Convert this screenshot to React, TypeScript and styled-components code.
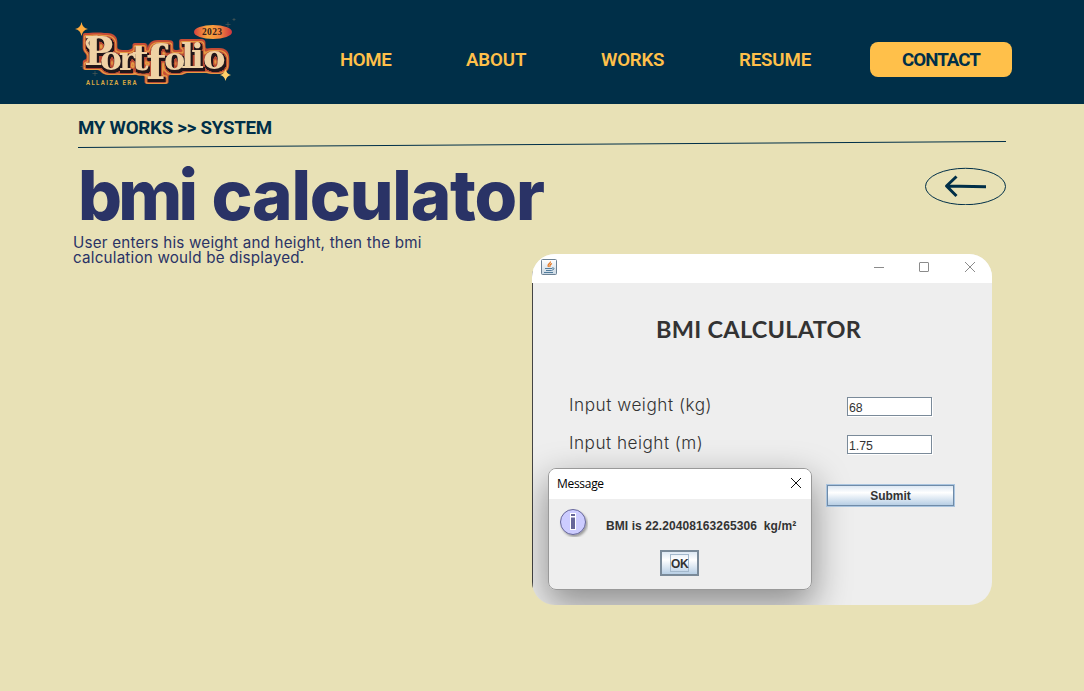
import React from "react";
import styled, { createGlobalStyle } from "styled-components";

const navy = "#002f48";
const amber = "#ffc04a";
const indigo = "#2a3366";

const GlobalStyle = createGlobalStyle`
  * { box-sizing: border-box; }
  body { margin: 0; background: #e8e1b6; }
`;

const Page = styled.div`
  width: 1084px;
  height: 691px;
  overflow: hidden;
  background: #e8e1b6;
  font-family: "Liberation Sans", sans-serif;
`;

const Header = styled.header`
  display: flex;
  align-items: flex-start;
  height: 104px;
  padding-left: 70px;
  background: ${navy};
`;

const Logo = styled.svg`
  flex: none;
  width: 170px;
  height: 104px;
`;

const Nav = styled.nav`
  display: flex;
  align-items: center;
  height: 35px;
  margin-top: 42px;
  padding-left: 100px;
`;

const NavLink = styled.a<{ $width: number; $spacing: number }>`
  flex: none;
  width: ${(p) => p.$width}px;
  font: 600 18.7px/37px Roboto, sans-serif;
  height: 35px;
  letter-spacing: ${(p) => p.$spacing}px;
  color: ${amber};
  white-space: nowrap;
`;

const ContactButton = styled.a`
  flex: none;
  width: 142px;
  height: 35px;
  padding-left: 32px;
  border-radius: 8px;
  background: ${amber};
  color: ${navy};
  font: 700 18.7px/37px Roboto, sans-serif;
  letter-spacing: -0.95px;
  white-space: nowrap;
`;

const Main = styled.main`
  padding: 12px 78px 0;
`;

const Breadcrumb = styled.div`
  height: 24px;
  font: 700 18.7px/24px Roboto, sans-serif;
  letter-spacing: -0.25px;
  color: ${navy};
  white-space: nowrap;
`;

const Divider = styled.svg`
  display: block;
  width: 928px;
  height: 10px;
`;

const Columns = styled.div`
  display: grid;
  grid-template-columns: 454px 474px;
`;

const Title = styled.h1`
  margin: 5px 0 0 0;
  height: 80px;
  font: 800 69px/80px Inter, sans-serif;
  letter-spacing: -1.2px;
  word-spacing: 3.5px;
  color: ${indigo};
  white-space: nowrap;
`;

const TightWord = styled.span`
  letter-spacing: -3.8px;
`;

const Description = styled.p`
  margin: 0 0 0 -5px;
  font: 400 15.2px/15px Inter, sans-serif;
  letter-spacing: 0.21px;
  color: ${indigo};
  white-space: nowrap;
`;

const BackArrow = styled.svg`
  display: block;
  width: 82px;
  height: 38px;
  margin: 17px 0 0 392px;
`;

const AppWindow = styled.section`
  position: relative;
  overflow: hidden;
  width: 460px;
  height: 351px;
  margin-top: 49px;
  border-radius: 23px;
  background: linear-gradient(90deg, #444 1px, #eee 1px);
  color: #333;
`;

const TitleBar = styled.div`
  display: flex;
  align-items: center;
  justify-content: space-between;
  height: 29px;
  padding: 0 16px 3px 9px;
  background: #fff;
`;

const WindowControls = styled.svg`
  width: 102px;
  height: 12px;
`;

const Heading = styled.h2`
  margin: 31px 0 0 124px;
  font: 700 23.5px/30px Lato, sans-serif;
  letter-spacing: 0.28px;
  white-space: nowrap;
`;

const Form = styled.div`
  display: grid;
  row-gap: 18px;
  margin-top: 53px;
`;

const FieldRow = styled.label`
  display: flex;
  height: 20px;
  padding-left: 37px;
`;

const FieldName = styled.span<{ $spacing: number }>`
  width: 278px;
  font: 300 17.2px/16px Inter, sans-serif;
  letter-spacing: ${(p) => p.$spacing}px;
  white-space: nowrap;
`;

const Field = styled.span`
  width: 85px;
  height: 19px;
  padding: 2px 0 0 1px;
  border: 1px solid #7a8a99;
  background: #fff;
  box-shadow: 1px 1px 0 #fff;
  font-size: 12.3px;
  line-height: 16px;
`;

const SubmitButton = styled.button`
  position: relative;
  display: block;
  width: 127px;
  height: 21px;
  margin: 30px 0 0 295px;
  padding: 1px 0 0;
  border: 1px solid #6f8ba8;
  outline: 1px solid #a9c4df;
  background: linear-gradient(#dde8f3, #fff 35%, #b8cfe5);
  font: bold 12px/18px "Liberation Sans", sans-serif;
  color: #333;
`;

const Dialog = styled.div`
  position: absolute;
  left: 16px;
  top: 214px;
  width: 264px;
  height: 122px;
  overflow: hidden;
  border: 1px solid #999;
  border-radius: 8px;
  background: #eee;
`;

const DialogShadow = styled.div`
  position: absolute;
  left: 16px;
  top: 214px;
  width: 264px;
  height: 122px;
  border-radius: 8px;
  box-shadow: 0 14px 36px 2px rgba(0, 0, 0, 0.4);
`;

const DialogBar = styled.div`
  display: flex;
  align-items: center;
  justify-content: space-between;
  height: 30px;
  padding: 0 9px 0 8px;
  background: #fff;
  color: #000;
  font: 12px/30px "Open Sans", sans-serif;
  letter-spacing: -0.3px;
`;

const CloseIcon = styled.svg`
  width: 12px;
  height: 12px;
  margin-bottom: 2px;
`;

const DialogMessage = styled.div`
  display: flex;
  height: 42px;
  padding: 9px 0 0 10px;
  font: bold 12px/36px "Liberation Sans", sans-serif;
  letter-spacing: 0.09px;
  white-space: pre;
`;

const MessageText = styled.span`
  margin-left: 15px;
`;

const OkButton = styled.button`
  display: block;
  width: 39px;
  height: 26px;
  margin: 9px 0 0 111px;
  padding: 0;
  border: 2px solid #7a8a99;
  background: linear-gradient(#dde8f3, #fff 35%, #b8cfe5);
  color: #333;
`;

const OkLabel = styled.span`
  display: block;
  width: 19px;
  height: 18px;
  margin: 0 auto;
  border: 1px solid #a3b8cc;
  font: bold 12px/18px "Liberation Sans", sans-serif;
  letter-spacing: -0.4px;
`;

const letters: [string, number, number, number][] = [
  ["P", 14, 65, 39],
  ["o", 30, 70, 33],
  ["r", 49, 70, 31],
  ["t", 62, 70, 36],
  ["f", 76, 79, 46],
  ["o", 94, 70, 32],
  ["l", 111, 68, 34],
  ["i", 121, 68, 34],
  ["o", 133, 69, 34],
];

const outlines = [
  { name: "shade", radius: 1, color: "#21161a", dy: 2 },
  { name: "rust", radius: 2, color: "#b64832", dy: 1.8 },
  { name: "gold", radius: 3, color: "#e69b43", dy: 1.5 },
  { name: "red", radius: 4, color: "#c74d35", dy: 1.2 },
];

function PortfolioLogo() {
  return (
    <Logo viewBox="0 0 170 104">
      <defs>
        <linearGradient id="badge"><stop stopColor="#d9423d" /><stop offset=".35" stopColor="#f8a73f" /><stop offset=".65" stopColor="#f58b3d" /><stop offset="1" stopColor="#cc353f" /></linearGradient>
        <filter id="outline" x="-10%" y="-20%" width="120%" height="140%" colorInterpolationFilters="sRGB">
          {outlines.map((o) => (
            <React.Fragment key={o.name}>
              <feMorphology in="SourceAlpha" operator="dilate" radius={o.radius} />
              <feGaussianBlur stdDeviation={o.radius > 1 ? 1.1 : 0.6} />
              <feComponentTransfer><feFuncA type="linear" slope="3" intercept="-1" /></feComponentTransfer>
              <feOffset dx="0.8" dy={o.dy} result={`${o.name}Shape`} />
              <feFlood floodColor={o.color} />
              <feComposite in2={`${o.name}Shape`} operator="in" result={o.name} />
            </React.Fragment>
          ))}
          <feMerge>
            <feMergeNode in="red" />
            <feMergeNode in="gold" />
            <feMergeNode in="rust" />
            <feMergeNode in="shade" />
            <feMergeNode in="SourceGraphic" />
          </feMerge>
        </filter>
      </defs>
      <g filter="url(#outline)" fill="#efd2a5" fontFamily="DejaVu Serif, serif" fontWeight="700">
        {letters.map(([ch, x, y, size], i) => (
          <text key={i} x={x} y={y} fontSize={size}>{ch}</text>
        ))}
        <path d="M20 48C14 43 18 37 27 37" fill="none" stroke="#efd2a5" strokeWidth="3" strokeLinecap="round" />
      </g>
      <ellipse cx="143" cy="32" rx="19" ry="7" fill="url(#badge)" />
      <text x="132" y="35" fontFamily="Liberation Serif, serif" fontWeight="700" fontSize="9.5" textLength="20" fill="#35201d">2023</text>
      <path d="M11.500 22Q12.500 28 18 29Q12.500 30 11.500 36Q10.500 30 5 29Q10.500 28 11.500 22Z" fill="#ffab3d" />
      <path d="M155.500 69Q156.500 74 161 75Q156.500 76 155.500 81Q154.500 76 150 75Q154.500 74 155.500 69Z" fill="#ffd16a" />
      <path d="M13 64v5M10.500 66.500h5M25 71v5M22.500 73.500h5M158 22v5M155.500 24.500h5M164 18v3M162.500 19.500h3" stroke="#7c725e" strokeWidth=".7" opacity=".6" />
      <text transform="translate(16 85) scale(.78 1)" fontFamily="Roboto, sans-serif" fontWeight="700" fontSize="7.8" textLength="65" fill="#d7a743">ALLAIZA ERA</text>
    </Logo>
  );
}

function JavaIcon() {
  return (
    <svg width="16" height="16" viewBox="0 0 16 16">
      <defs><linearGradient id="java" x2="0" y2="1"><stop stopColor="#fff" /><stop offset="1" stopColor="#c9d7e3" /></linearGradient></defs>
      <rect x=".5" y=".5" width="15" height="15" rx="1" fill="url(#java)" stroke="#6c8194" />
      <path d="M9.500 2.500C10 4.500 5.500 5 7.500 8M11 4.500C8.500 5.500 8.500 6.500 9 8" fill="none" stroke="#e77924" strokeWidth="1.2" />
      <path d="M4 9.500h7M5 11.500h5.500M3 13.500h9M11 9q3-.5 1.500 1.500l-2 1" fill="none" stroke="#517c9c" strokeWidth="1" />
    </svg>
  );
}

function InfoIcon() {
  return (
    <svg width="32" height="32" viewBox="0 0 32 32">
      <defs><filter id="iconShadow"><feDropShadow dx="1.5" dy="2" stdDeviation="1.3" floodOpacity=".35" /></filter></defs>
      <circle cx="14" cy="14" r="12.500" fill="#ccccff" stroke="#666699" filter="url(#iconShadow)" />
      <path d="M11 5h6v17h-6z" fill="#fff" />
      <path d="M12 6h4v2h-4zM12 9.500h4v11.500h-4z" fill="#666699" />
    </svg>
  );
}

export default function App() {
  return (
    <Page>
      <GlobalStyle />
      <Header>
        <PortfolioLogo />
        <Nav>
          <NavLink $width={126} $spacing={-0.4}>HOME</NavLink>
          <NavLink $width={135} $spacing={-0.15}>ABOUT</NavLink>
          <NavLink $width={138} $spacing={-0.25}>WORKS</NavLink>
          <NavLink $width={131} $spacing={-0.15}>RESUME</NavLink>
          <ContactButton>CONTACT</ContactButton>
        </Nav>
      </Header>
      <Main>
        <Breadcrumb>MY WORKS &gt;&gt; SYSTEM</Breadcrumb>
        <Divider viewBox="0 0 928 10"><path d="M0 7.500L928 1.500" stroke={navy} /></Divider>
        <Columns>
          <div>
            <Title><TightWord>bmi</TightWord> calculator</Title>
            <Description>User enters his weight and height, then the bmi<br />calculation would be displayed.</Description>
          </div>
          <div>
            <BackArrow viewBox="0 0 82 38" fill="none" stroke={navy}>
              <ellipse cx="41.500" cy="19.500" rx="40" ry="18.200" />
              <path d="M62 19.800L22.500 19M32.500 9.500L22.500 19L32.500 29" strokeWidth="3" strokeLinejoin="round" />
            </BackArrow>
            <AppWindow>
              <TitleBar>
                <JavaIcon />
                <WindowControls viewBox="0 0 102 12" fill="none" stroke="#8b8b8b">
                  <path d="M0 6.500h10M91 1l10 10M101 1l-10 10" />
                  <rect x="45.500" y="1.500" width="9" height="9" rx=".5" />
                </WindowControls>
              </TitleBar>
              <Heading>BMI CALCULATOR</Heading>
              <Form>
                <FieldRow><FieldName $spacing={0.52}>Input weight (kg)</FieldName><Field>68</Field></FieldRow>
                <FieldRow><FieldName $spacing={0.48}>Input height (m)</FieldName><Field>1.75</Field></FieldRow>
              </Form>
              <DialogShadow />
              <SubmitButton>Submit</SubmitButton>
              <Dialog>
                <DialogBar>
                  <span>Message</span>
                  <CloseIcon viewBox="0 0 12 12" stroke="#111"><path d="M1 1l10 10M11 1L1 11" /></CloseIcon>
                </DialogBar>
                <DialogMessage>
                  <InfoIcon />
                  <MessageText>{"BMI is 22.20408163265306  kg/m²"}</MessageText>
                </DialogMessage>
                <OkButton><OkLabel>OK</OkLabel></OkButton>
              </Dialog>
            </AppWindow>
          </div>
        </Columns>
      </Main>
    </Page>
  );
}
